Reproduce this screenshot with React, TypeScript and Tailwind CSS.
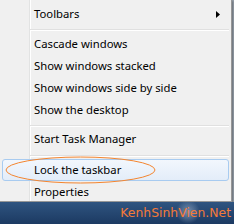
import React from 'react';

function Row({ label, arrow }: { label: string; arrow?: boolean }) {
  return (
    <div className="flex h-[22px] items-center pl-[34px] pr-[11px]">
      <span className="flex-1">{label}</span>
      {arrow && (
        <svg width="4" height="7" viewBox="0 0 4 7">
          <path d="M0 0 L4 3.5 L0 7 Z" fill="#000" />
        </svg>
      )}
    </div>
  );
}

function Separator({ top, bottom }: { top: number; bottom: number }) {
  return (
    <div style={{ paddingTop: top, paddingBottom: bottom }} className="pl-[30px] pr-[2px]">
      <div className="h-px bg-[#e0e0e0]" />
      <div className="h-px bg-white" />
    </div>
  );
}

export default function App() {
  return (
    <div className="relative flex h-[224px] w-[234px] flex-col overflow-hidden bg-[#9aa3ad] font-['Segoe_UI','Noto_Sans',sans-serif] text-[11.3px] text-black">
      <div className="h-[202px] w-[232px] border-r border-b border-[#979797] bg-[linear-gradient(to_right,#f0f0f0_29px,#e2e3e3_29px,#e2e3e3_30px,#ffffff_30px,#ffffff_31px,#f0f0f0_31px)] pt-[3px] shadow-[1px_1px_2px_rgba(0,0,0,0.35)]">
        <Row label="Toolbars" arrow />
        <Separator top={4} bottom={2} />
        <Row label="Cascade windows" />
        <Row label="Show windows stacked" />
        <Row label="Show windows side by side" />
        <Row label="Show the desktop" />
        <Separator top={4} bottom={1} />
        <Row label="Start Task Manager" />
        <Separator top={5} bottom={2} />
        <div className="mx-[2px] flex h-[22px] items-center rounded-[3px] border border-[#a8cbf0] bg-[linear-gradient(to_bottom,#f2f7fd,#e3edf9)] pl-[31px]">
          Lock the taskbar
        </div>
        <Row label="Properties" />
      </div>
      <div className="relative flex h-[22px] flex-1 items-center justify-end bg-[radial-gradient(ellipse_12px_12px_at_188px_10px,rgba(220,230,245,0.45),rgba(220,230,245,0)),linear-gradient(to_bottom,#2f5480,#1c3a62)] pr-[3px]">
        <span className="font-['DejaVu_Sans',sans-serif] text-[12.4px] text-[#f47a38]">KenhSinhVien.Net</span>
      </div>
      <svg className="absolute left-0 top-0" width="234" height="224" viewBox="0 0 234 224">
        <ellipse cx="80.5" cy="170" rx="74.5" ry="13" fill="none" stroke="#f4852f" strokeWidth="1" />
      </svg>
    </div>
  );
}
